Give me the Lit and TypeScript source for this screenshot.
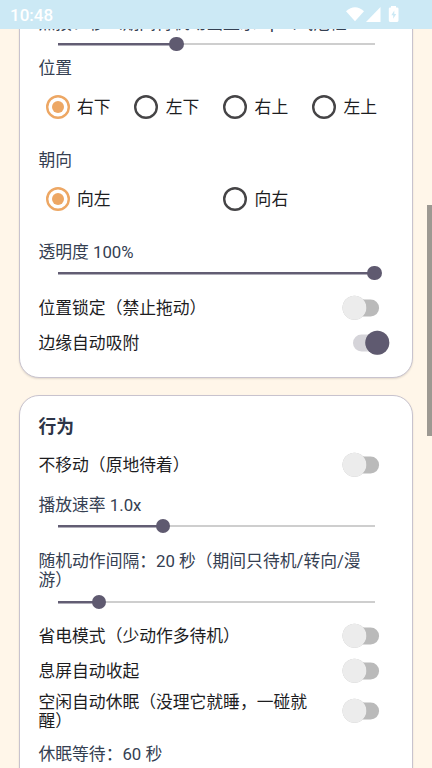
import { LitElement, html, css, svg } from "lit";
import { customElement, property } from "lit/decorators.js";

@customElement("pet-slider")
class PetSlider extends LitElement {
  @property({ type: Number }) value = 0;
  static styles = css`
    :host { display: block; height: 14px; margin: 0 19px; }
    .track { position: relative; height: 14px; background: linear-gradient(#cecece, #cecece) 0 6px / 100% 2px no-repeat; }
    .fill { height: 14px; background: linear-gradient(#625d73, #625d73) 0 6px / 100% 2.5px no-repeat; }
    .thumb { position: absolute; top: 0; width: 14.4px; height: 14.4px; margin-left: -7.2px; border-radius: 50%; background: #5f5a70; }
  `;
  render() {
    return html`<div class="track">
      <div class="fill" style="width:${this.value}%"></div>
      <div class="thumb" style="left:${this.value}%"></div>
    </div>`;
  }
}

@customElement("pet-radio")
class PetRadio extends LitElement {
  @property({ type: Boolean }) checked = false;
  static styles = css`
    :host { display: flex; align-items: center; gap: 7.5px; padding-left: 7px; height: 24px; color: #1d1d1f; }
    svg { width: 24px; height: 24px; flex: none; }
    .label { padding-top: 1px; }
  `;
  render() {
    const c = this.checked ? "#eda764" : "#454446";
    return html`<svg viewBox="0 0 24 24">
        <circle cx="12" cy="12" r="10.8" fill="none" stroke=${c} stroke-width="2.4"></circle>
        ${this.checked ? svg`<circle cx="12" cy="12" r="6" fill=${c}></circle>` : null}
      </svg><span class="label"><slot></slot></span>`;
  }
}

@customElement("pet-switch")
class PetSwitch extends LitElement {
  @property({ type: Boolean }) on = false;
  @property() label = "";
  static styles = css`
    :host { display: flex; align-items: center; justify-content: space-between; color: #1d1d1f; }
    .label { width: 274px; padding-top: 1.5px; }
    svg { width: 56px; height: 34px; flex: none; margin: -5px 0; overflow: visible; }
    .knob { filter: drop-shadow(0 0.8px 0.7px rgba(0, 0, 0, 0.25)); }
  `;
  render() {
    return html`<div class="label">${this.label}</div>
      <svg viewBox="0 0 56 34">
        ${this.on
          ? svg`<rect x="15" y="8.5" width="34" height="17" rx="8.5" fill="#d5d4d9"></rect>
              <circle class="knob" cx="39.3" cy="16.7" r="12" fill="#5f5a70"></circle>`
          : svg`<rect x="7.5" y="8.5" width="33.6" height="17" rx="8.5" fill="#bababa"></rect>
              <circle class="knob" cx="16.5" cy="16.7" r="12" fill="#ececec"></circle>`}
      </svg>`;
  }
}

@customElement("app-root")
class AppRoot extends LitElement {
  static styles = css`
    :host { display: flex; flex-direction: column; position: relative; width: 432px; height: 768px; overflow: hidden; background: #fff6e9;
      font: 16.8px/19px Roboto, "Noto Sans CJK SC", sans-serif; color: #354052; }
    .status { display: flex; justify-content: space-between; align-items: center; height: 29px; flex: none; background: #cce9f5; color: #fff; box-sizing: border-box; padding: 0 32px 0 10px; }
    .time { font: 500 17px/20px Roboto, sans-serif; padding-top: 1px; }
    .status svg { width: 54px; height: 18px; margin-top: -1px; }
    .page { flex: 1; min-height: 0; overflow: hidden; display: flex; flex-direction: column; }
    .card { box-sizing: border-box; flex: none; width: 394px; margin-left: 19px; border: 1.5px solid #c8c3ce; border-radius: 20px; background: #fff; padding: 0 18.5px; box-shadow: 0 1px 2px rgba(0, 0, 0, 0.12); }
    .appearance { margin-top: -30px; height: 379px; }
    .behavior { margin-top: 17px; height: 420px; padding-top: 21px; }
    .title { font-size: 17.8px; font-weight: 700; line-height: 20px; color: #2d3548; }
    .grid4 { display: grid; grid-template-columns: repeat(4, 88.8px); }
    .grid2 { display: grid; grid-template-columns: repeat(2, 177.6px); }
    .scroll { position: absolute; right: 0; top: 205px; width: 5px; height: 231px; background: #9d9992; }
    .size { padding-top: 14px; }
    .size-slider { margin-top: 3.5px; }
    .corner { margin-top: 8px; }
    .choices { margin-top: 17px; }
    .facing { margin-top: 32px; }
    .opacity { margin-top: 32px; }
    .opacity-slider { margin-top: 4px; }
    .lock { margin-top: 10.5px; }
    .stay { margin-top: 10px; }
    .rate { margin-top: 14px; }
    .rate-slider { margin-top: 3.500px; }
    .interval { margin-top: 19.5px; width: 330px; }
    .interval-slider { margin-top: 4.5px; }
    .saver { margin-top: 10px; }
    .idle { height: 45px; }
    .wait { margin-top: 11.5px; }
    pet-switch { min-height: 35px; }
  `;
  render() {
    return html`
      <div class="status">
        <span class="time">10:48</span>
        <svg viewBox="346 5 54 18" fill="#fff">
          <path d="M346 11.2Q355 3.2 364 11.2L355 21.3Z"></path>
          <path d="M380.5 7V22H366Z"></path>
          <path d="M391 7.5V6h5v1.5h1.2q1.3 0 1.3 1.3V20.6q0 1.3-1.3 1.3h-7.1q-1.3 0-1.3-1.3V8.800q0-1.3 1.3-1.3Z"></path>
          <path d="M394.300 10.500l-3 4.700h1.900v3.600l3-4.800h-1.900Z" fill="#cce9f5"></path>
        </svg>
      </div>
      <div class="page">
        <div class="card appearance">
          <div class="size">点按：秒（期间待机动画显示 up（气泡框</div>
          <pet-slider class="size-slider" value="37.5"></pet-slider>
          <div class="corner">位置</div>
          <div class="grid4 choices">
            <pet-radio checked>右下</pet-radio><pet-radio>左下</pet-radio><pet-radio>右上</pet-radio><pet-radio>左上</pet-radio>
          </div>
          <div class="facing">朝向</div>
          <div class="grid2 choices"><pet-radio checked>向左</pet-radio><pet-radio>向右</pet-radio></div>
          <div class="opacity">透明度 100%</div>
          <pet-slider class="opacity-slider" value="100"></pet-slider>
          <pet-switch class="lock" label="位置锁定（禁止拖动）"></pet-switch>
          <pet-switch on label="边缘自动吸附"></pet-switch>
        </div>
        <div class="card behavior">
          <div class="title">行为</div>
          <pet-switch class="stay" label="不移动（原地待着）"></pet-switch>
          <div class="rate">播放速率 1.0x</div>
          <pet-slider class="rate-slider" value="33.3"></pet-slider>
          <div class="interval">随机动作间隔：20 秒（期间只待机/转向/漫游）</div>
          <pet-slider class="interval-slider" value="13"></pet-slider>
          <pet-switch class="saver" label="省电模式（少动作多待机）"></pet-switch>
          <pet-switch label="息屏自动收起"></pet-switch>
          <pet-switch class="idle" label="空闲自动休眠（没理它就睡，一碰就醒）"></pet-switch>
          <div class="wait">休眠等待：60 秒</div>
        </div>
      </div>
      <div class="scroll"></div>
    `;
  }
}
